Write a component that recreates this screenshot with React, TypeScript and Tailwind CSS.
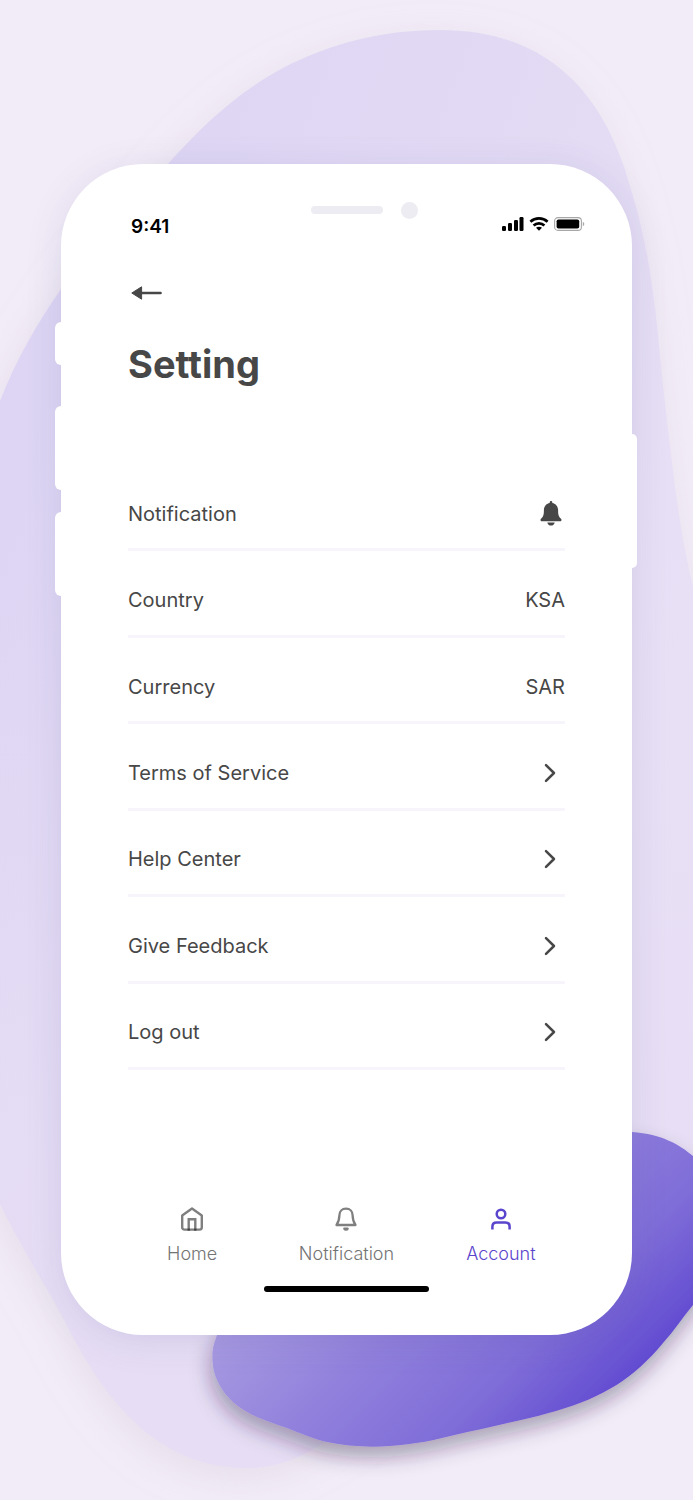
import React, { useState } from 'react';

// Soft shapes behind the phone
const Backdrop = () => (
    <svg
        aria-hidden="true"
        viewBox="0 0 693 1500"
        preserveAspectRatio="xMidYMid slice"
        className="absolute inset-0 w-full h-full pointer-events-none"
    >
        <defs>
            <linearGradient id="pale" gradientUnits="userSpaceOnUse" x1="0" y1="520" x2="640" y2="760">
                <stop offset="0" stopColor="#ddd5f3" />
                <stop offset="1" stopColor="#e8e0f5" />
            </linearGradient>
            <linearGradient id="paleDown" gradientUnits="userSpaceOnUse" x1="0" y1="600" x2="0" y2="1468">
                <stop offset="0" stopColor="#e7def5" stopOpacity="0" />
                <stop offset="1" stopColor="#e7def5" />
            </linearGradient>
            <linearGradient id="deep" gradientUnits="userSpaceOnUse" x1="300" y1="1220" x2="558" y2="1478">
                <stop offset="0" stopColor="#ac9fe2" />
                <stop offset="0.4" stopColor="#9180dc" />
                <stop offset="0.7" stopColor="#7f6dd8" />
                <stop offset="1" stopColor="#5c44cf" />
            </linearGradient>
            <filter id="paleShadow" x="-20%" y="-20%" width="140%" height="140%">
                <feDropShadow dx="-4" dy="10" stdDeviation="18" floodColor="#c8bcc8" floodOpacity="0.28" />
            </filter>
            <filter id="deepShadow" x="-20%" y="-20%" width="140%" height="140%">
                <feDropShadow dx="-2" dy="11" stdDeviation="10" floodColor="#2c2440" floodOpacity="0.36" />
            </filter>
        </defs>
        <g filter="url(#paleShadow)">
            <path
                d="M440 30 C380 30 330 44 283 68 C238 92 203 125 168 164 C128 204 94 242 61 289 C36 325 16 360 0 401 C-70 560 -110 980 0 1204 C17 1238 34 1267 50 1294 C64 1317 74 1341 88 1363 C118 1412 166 1468 247 1468 C275 1468 300 1458 320 1445 C420 1390 620 1270 700 1144 C780 1000 760 800 693 587 C680 533 673 474 667 420 C661 370 658 330 654 300 C647 245 637 206 623 164 C591 72 528 30 440 30 Z"
                fill="url(#pale)"
            />
            <path
                d="M0 401 C-70 560 -110 980 0 1204 C17 1238 34 1267 50 1294 C64 1317 74 1341 88 1363 C118 1412 166 1468 247 1468 C275 1468 300 1458 320 1445 C420 1390 620 1270 700 1144 C780 1000 760 800 693 587 L667 420 Z"
                fill="url(#paleDown)"
            />
        </g>
        <path
            d="M632 1132 C662 1134 680 1145 693 1156 C745 1198 740 1255 693 1305 C683 1317 674 1331 663 1343 C634 1378 604 1397 556 1411 C525 1420 480 1429 442 1438 C405 1447 363 1450 327 1442 C313 1439 300 1433 287 1428 C273 1423 259 1419 247 1412 C227 1401 215 1382 213 1366 C211 1350 214 1344 217 1335 C260 1240 520 1128 632 1132 Z"
            fill="url(#deep)"
            filter="url(#deepShadow)"
        />
    </svg>
);

const SignalIcon = () => (
    <svg width="22" height="14" viewBox="0 0 22 14" aria-hidden="true">
        <rect x="0" y="9" width="4" height="5" rx="1.2" />
        <rect x="6" y="6" width="4" height="8" rx="1.2" />
        <rect x="12" y="3" width="4" height="11" rx="1.2" />
        <rect x="17.5" y="0" width="4" height="14" rx="1.2" />
    </svg>
);

const WifiIcon = () => (
    <svg width="20" height="14" viewBox="0 0 20 14" fill="none" stroke="black" strokeWidth="2.7" aria-hidden="true">
        <path d="M1.4 4.7 C6.2 0.3 13.8 0.3 18.6 4.7" />
        <path d="M4.6 8.5 C7.6 5.6 12.4 5.6 15.4 8.5" />
        <path d="M7 10.8 C8.7 9.4 11.3 9.4 13 10.8 L10 13.8 Z" fill="black" stroke="none" />
    </svg>
);

const BatteryIcon = () => (
    <svg width="31" height="14" viewBox="0 0 31 14" aria-hidden="true">
        <rect x="0.6" y="0.6" width="26.8" height="12.8" rx="3.4" fill="none" stroke="#a6a6a6" strokeWidth="1.1" />
        <rect x="2.6" y="2.4" width="22.6" height="9.2" rx="1.8" />
        <path d="M28.8 4.8 C30.8 5.6 30.8 8.4 28.8 9.2 Z" fill="#a6a6a6" />
    </svg>
);

const BellSolid = () => (
    <svg width="22" height="26" viewBox="0 0 22 26" fill="#474747" aria-hidden="true">
        <path d="M11 0 C11.8 0 12.3 0.6 12.3 1.4 V2 C16 2.7 18.1 5.5 18.1 9.2 C18.1 14.2 18.8 15.6 21 17.8 C22 19 21.4 20.3 20 20.3 H2 C0.6 20.3 0 19 1 17.8 C3.2 15.6 3.9 14.2 3.9 9.2 C3.9 5.5 6 2.7 9.7 2 V1.4 C9.7 0.6 10.2 0 11 0 Z" />
        <path d="M7.3 21.4 H14.7 C14.4 23.3 12.9 24.5 11 24.5 C9.1 24.5 7.6 23.3 7.3 21.4 Z" />
    </svg>
);

const Chevron = () => (
    <svg width="12" height="20" viewBox="0 0 12 20" fill="none" stroke="#474747" strokeWidth="2.5" strokeLinecap="round" strokeLinejoin="round" aria-hidden="true">
        <path d="M2 2.2 L10 10 L2 17.8" />
    </svg>
);

const HomeIcon = () => (
    <svg width="24" height="24" viewBox="0 0 24 24" fill="none" stroke="black" strokeOpacity="0.5" strokeWidth="2.4" aria-hidden="true">
        <path d="M12 1.6 L21.8 8.6 V20.2 Q21.8 22.6 19.4 22.6 H4.6 Q2.2 22.6 2.2 20.2 V8.6 Z" strokeLinejoin="round" />
        <path d="M8.7 23.8 V12.3 H15.3 V23.8" />
    </svg>
);

const BellOutline = () => (
    <svg width="24" height="24" viewBox="0 0 24 24" fill="none" stroke="#7f7f7f" strokeWidth="2.3" strokeLinejoin="round" strokeLinecap="round" aria-hidden="true">
        <path d="M12 1.6 C8 1.6 5.5 4.3 5.4 8.2 C5.3 12.5 4.7 15 2.5 18 H21.5 C19.3 15 18.7 12.5 18.6 8.2 C18.5 4.3 16 1.6 12 1.6 Z" />
        <path d="M10.3 21.7 C11 23 13 23 13.7 21.7 Z" />
    </svg>
);

const UserIcon = () => (
    <svg width="24" height="24" viewBox="0 0 24 24" fill="none" stroke="#5a45cd" strokeWidth="2.5" aria-hidden="true">
        <circle cx="12" cy="7" r="4.3" />
        <path d="M3.4 22.6 V19.6 Q3.4 15.4 7.6 15.4 H16.4 Q20.6 15.4 20.6 19.6 V22.6" />
    </svg>
);

const settings = [
    { label: 'Notification', icon: 'bell' },
    { label: 'Country', value: 'KSA' },
    { label: 'Currency', value: 'SAR' },
    { label: 'Terms of Service' },
    { label: 'Help Center' },
    { label: 'Give Feedback' },
    { label: 'Log out' },
];

const tabs = [
    { label: 'Home', Icon: HomeIcon },
    { label: 'Notification', Icon: BellOutline },
    { label: 'Account', Icon: UserIcon },
];

export default function App() {
    const [active, setActive] = useState('Account');

    return (
        <div className="relative min-h-screen overflow-hidden bg-[#f2ecf8] px-[61px] pt-[164px] pb-[165px] font-['Inter',sans-serif]">
            <Backdrop />

            <div className="relative rounded-[82px] bg-white pt-[38px] pb-[43px] shadow-[0_6px_36px_rgba(80,80,150,0.13)]">

                {/* Hardware buttons */}
                <span className="absolute -left-[6px] top-[158px] h-[43px] w-[6px] rounded-l-md bg-white"></span>
                <span className="absolute -left-[6px] top-[242px] h-[84px] w-[6px] rounded-l-md bg-white"></span>
                <span className="absolute -left-[6px] top-[348px] h-[84px] w-[6px] rounded-l-md bg-white"></span>
                <span className="absolute -right-[5px] top-[270px] h-[134px] w-[5px] rounded-r-md bg-white"></span>

                {/* Status bar */}
                <div className="grid grid-cols-[1fr_72px_1fr] items-start">
                    <time className="pt-[15px] pl-[70px] text-[19px] leading-5 font-semibold text-black">9:41</time>
                    <span className="mt-1 h-2 rounded-full bg-[#edecf2]"></span>
                    <div className="flex items-start justify-between pl-[18px] pr-[47px]">
                        <span className="size-[17px] rounded-full bg-[#edecf2]"></span>
                        <div className="flex gap-[5px] pt-[15px]">
                            <SignalIcon />
                            <WifiIcon />
                            <BatteryIcon />
                        </div>
                    </div>
                </div>

                <main className="px-[67px] pt-11 text-[#474747]">
                    <button type="button" aria-label="Back" className="flex h-6 items-center pl-[3px]">
                        <svg width="32" height="14" viewBox="0 0 32 14" aria-hidden="true">
                            <path d="M10.6 0.8 V13.2 L0.8 7 Z" fill="#474747" stroke="#474747" strokeLinejoin="round" />
                            <path d="M10 7 H29.6" stroke="#474747" strokeWidth="2.4" strokeLinecap="round" />
                        </svg>
                    </button>

                    <h1 className="mt-[35px] text-[38px] leading-[48px] font-bold">Setting</h1>

                    <ul className="mt-[77px] grid h-[605px] grid-rows-7 text-xl font-normal">
                        {settings.map(({ label, value, icon }) => (
                            <li key={label} className="border-b-3 border-[#f7f5fb]">
                                <button type="button" className="flex h-full w-full items-center justify-between pt-[14px] text-left">
                                    <span>{label}</span>
                                    {value && <span>{value}</span>}
                                    {icon && <span className="pr-[3px]"><BellSolid /></span>}
                                    {!value && !icon && <span className="pr-[9px]"><Chevron /></span>}
                                </button>
                            </li>
                        ))}
                    </ul>
                </main>

                <nav className="mt-[137px] grid grid-cols-3 px-[54px] text-lg leading-6 font-light">
                    {tabs.map(({ label, Icon }) => (
                        <button
                            key={label}
                            type="button"
                            onClick={() => setActive(label)}
                            className={`flex flex-col items-center gap-[11px] ${active === label ? 'text-[#5a45cd]' : 'text-[#747474]'}`}
                        >
                            <Icon />
                            {label}
                        </button>
                    ))}
                </nav>

                <div className="mx-auto mt-5 h-[6px] w-[165px] rounded-full bg-black"></div>
            </div>
        </div>
    );
}
